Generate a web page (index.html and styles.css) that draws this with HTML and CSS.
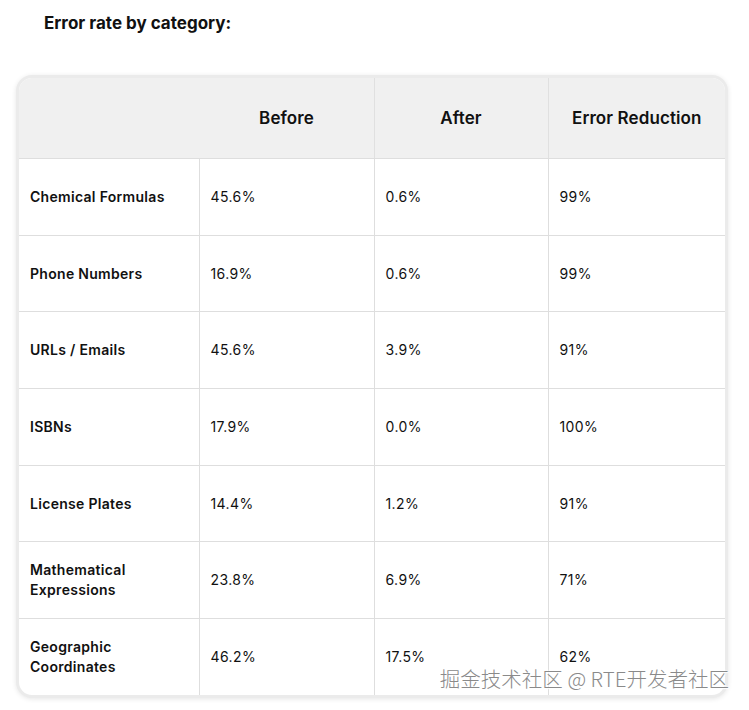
FILE: index.html
```html
<!DOCTYPE html>
<html>
<head>
<meta charset="utf-8">
<link rel="stylesheet" href="styles.css">
</head>
<body>
<div class="page">
  <h3 class="title">Error rate by category:</h3>
  <div class="frame">
    <table class="grid">
      <colgroup>
        <col class="c1"><col class="c2"><col class="c3"><col class="c4">
      </colgroup>
      <thead>
        <tr><th></th><th class="nol">Before</th><th>After</th><th>Error Reduction</th></tr>
      </thead>
      <tbody>
        <tr><td class="name">Chemical Formulas</td><td>45.6%</td><td>0.6%</td><td>99%</td></tr>
        <tr><td class="name">Phone Numbers</td><td>16.9%</td><td>0.6%</td><td>99%</td></tr>
        <tr><td class="name">URLs / Emails</td><td>45.6%</td><td>3.9%</td><td>91%</td></tr>
        <tr><td class="name">ISBNs</td><td>17.9%</td><td>0.0%</td><td>100%</td></tr>
        <tr><td class="name">License Plates</td><td>14.4%</td><td>1.2%</td><td>91%</td></tr>
        <tr><td class="name">Mathematical<br>Expressions</td><td>23.8%</td><td>6.9%</td><td>71%</td></tr>
        <tr><td class="name">Geographic<br>Coordinates</td><td>46.2%</td><td>17.5%</td><td>62%</td></tr>
      </tbody>
    </table>
  </div>
  <div class="watermark">掘金技术社区 @ RTE开发者社区</div>
</div>
</body>
</html>
```
FILE: styles.css
```css
html, body {
  margin: 0;
  padding: 0;
  background: #ffffff;
}
.page {
  position: relative;
  width: 749px;
  height: 710px;
  font-family: Inter, "Liberation Sans", sans-serif;
  color: #111111;
  overflow: hidden;
}
.title {
  margin: 0;
  padding: 13px 0 0 44px;
  font-size: 17px;
  line-height: 20px;
  font-weight: 700;
  color: #111111;
}
.frame {
  margin: 42px 0 0 16px;
  width: 706px;
  border: 3px solid #ebebeb;
  border-radius: 16px;
  overflow: hidden;
  box-shadow: 0 1px 5px rgba(0, 0, 0, 0.10);
  background: #ffffff;
}
.grid {
  width: 706px;
  border-collapse: collapse;
  table-layout: fixed;
}
.c1 { width: 180px; }
.c2 { width: 175px; }
.c3 { width: 174px; }
.c4 { width: 177px; }
.grid th {
  height: 80px;
  padding: 0;
  background: #f0f0f0;
  font-size: 17px;
  font-weight: 600;
  letter-spacing: 0.1px;
  text-align: center;
  border-left: 1px solid #e0e0e0;
  border-bottom: 1px solid #dedede;
  color: #111111;
}
.grid th.nol {
  border-left: 1px solid #f0f0f0;
}
.grid td {
  height: 75.7px;
  padding: 0 11px;
  font-size: 14px;
  line-height: 20px;
  letter-spacing: 0.4px;
  border-left: 1px solid #dedede;
  border-bottom: 1px solid #dedede;
  vertical-align: middle;
}
.grid th:first-child,
.grid td:first-child {
  border-left: none;
}
.grid tbody tr:last-child td {
  border-bottom: none;
}
.grid td.name {
  font-weight: 600;
  letter-spacing: 0.3px;
}
.watermark {
  position: absolute;
  right: 20px;
  top: 665px;
  font-family: "Noto Sans CJK SC", sans-serif;
  font-size: 20.5px;
  line-height: 26px;
  font-weight: 300;
  color: #8a8a8a;
  text-shadow: 0 0 2px #ffffff, 0 0 2px #ffffff, 1px 1px 1px #ffffff;
  white-space: nowrap;
}
```
